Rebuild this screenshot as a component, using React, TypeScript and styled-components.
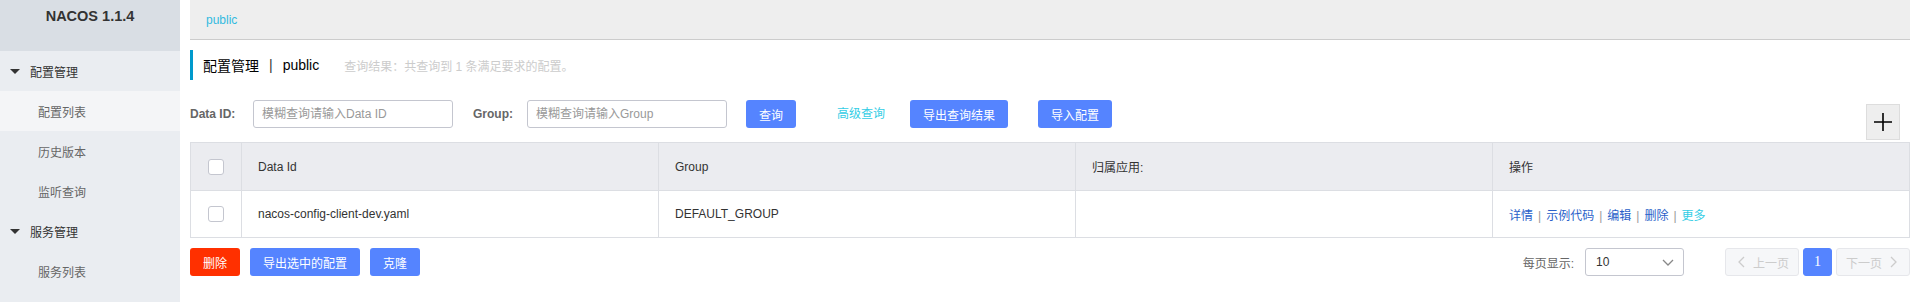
import React from "react";
import styled, { createGlobalStyle } from "styled-components";

const Global = createGlobalStyle`
  html, body { margin: 0; padding: 0; background: #fff; }
  body { font-family: "Liberation Sans", "Noto Sans CJK SC", sans-serif; font-size: 12px; color: #333; }
  * { box-sizing: border-box; }
`;

const Page = styled.div`
  display: flex;
  width: 1920px;
  height: 302px;
  overflow: hidden;
`;

const Sidebar = styled.aside`
  width: 180px;
  flex: none;
  background: #eaedf1;
  display: flex;
  flex-direction: column;
`;

const Logo = styled.div`
  height: 51px;
  background: #d9dee4;
  text-align: center;
  padding-top: 5px;
  font-family: "Liberation Sans", sans-serif;
  font-weight: bold;
  font-size: 14.5px;
  line-height: 22px;
  color: #333;
`;

const GroupItem = styled.div`
  height: 40px;
  display: flex;
  align-items: center;
  padding-left: 10px;
  font-size: 12px;
  color: #333;
`;

const Caret = styled.span`
  width: 0;
  height: 0;
  border-left: 5px solid transparent;
  border-right: 5px solid transparent;
  border-top: 5px solid #333;
  margin-right: 10px;
`;

const SubItem = styled.div<{ $active?: boolean }>`
  height: 40px;
  display: flex;
  align-items: center;
  padding-left: 38px;
  font-size: 12px;
  color: #666;
  background: ${(p) => (p.$active ? "#f4f5f7" : "transparent")};
`;

const Main = styled.main`
  flex: 1;
  padding: 0 10px;
  display: flex;
  flex-direction: column;
`;

const Crumb = styled.div`
  height: 40px;
  background: #eee;
  border-bottom: 1px solid #ccc;
  display: flex;
  align-items: center;
  padding-left: 16px;
  color: #33bbe0;
  font-size: 12px;
`;

const TitleRow = styled.div`
  margin-top: 10px;
  height: 30px;
  border-left: 3px solid #09c;
  display: flex;
  align-items: center;
  padding-left: 10px;
`;

const TitleText = styled.span`
  font-size: 14px;
  color: #000;
`;

const TitleSep = styled.span`
  font-size: 14px;
  color: #333;
  margin: 0 10px;
`;

const ResultText = styled.span`
  margin-left: 25px;
  font-size: 12px;
  color: #ccc;
`;

const Toolbar = styled.div`
  margin-top: 20px;
  display: flex;
  align-items: flex-start;
  height: 40px;
`;

const Label = styled.label<{ $w: number }>`
  width: ${(p) => p.$w}px;
  flex: none;
  font-weight: bold;
  font-size: 12px;
  color: #666;
  height: 28px;
  line-height: 28px;
`;

const Input = styled.input<{ $gap?: number }>`
  width: 200px;
  height: 28px;
  border: 1px solid #c4c6cf;
  border-radius: 3px;
  padding: 0 8px;
  font-family: inherit;
  font-size: 12px;
  color: #333;
  margin-right: ${(p) => p.$gap ?? 20}px;
  outline: none;
  &::placeholder { color: #999; }
`;

const Button = styled.button<{ $w: number; $danger?: boolean; $gap?: number }>`
  height: 28px;
  width: ${(p) => p.$w}px;
  flex: none;
  padding: 0;
  border: none;
  border-radius: 3px;
  background: ${(p) => (p.$danger ? "#ff3000" : "#5584ff")};
  color: #fff;
  font-family: inherit;
  font-size: 12px;
  margin-right: ${(p) => p.$gap ?? 30}px;
  cursor: pointer;
`;

const LinkBtn = styled.a`
  height: 28px;
  line-height: 28px;
  color: #33cde5;
  font-size: 12px;
  margin-left: 41px;
  margin-right: 25px;
`;

const PlusBtn = styled.button`
  margin-left: auto;
  margin-right: 10px;
  margin-top: 4px;
  width: 34px;
  height: 36px;
  background: #eee;
  border: 1px solid #ddd;
  display: flex;
  align-items: center;
  justify-content: center;
  padding: 0;
`;

const Table = styled.table`
  margin-top: 2px;
  width: 1720px;
  border-collapse: collapse;
  table-layout: fixed;
  border: 1px solid #dcdee3;
`;

const Th = styled.th`
  height: 48px;
  background: #ebecf0;
  border: 1px solid #dcdee3;
  text-align: left;
  font-weight: normal;
  font-size: 12px;
  color: #333;
  padding: 0 16px;
`;

const Td = styled.td`
  height: 47px;
  border: 1px solid #dcdee3;
  font-size: 12px;
  color: #333;
  padding: 0 16px;
`;

const CheckCell = styled.td`
  text-align: center;
  border: 1px solid #dcdee3;
  padding: 0;
`;

const CheckHead = styled.th`
  background: #ebecf0;
  border: 1px solid #dcdee3;
  padding: 0;
  height: 48px;
`;

const Checkbox = styled.span`
  display: inline-block;
  width: 16px;
  height: 16px;
  border: 1px solid #c4c6cf;
  border-radius: 3px;
  background: #fff;
  vertical-align: middle;
`;

const Op = styled.a<{ $more?: boolean }>`
  color: ${(p) => (p.$more ? "#33cde5" : "#2a5fc9")};
`;

const OpSep = styled.span`
  color: #999;
  margin: 0 5px;
`;

const Footer = styled.div`
  margin-top: 10px;
  display: flex;
  align-items: center;
`;

const PageLabel = styled.span`
  margin-left: auto;
  color: #666;
  font-size: 12px;
  margin-right: 11px;
`;

const Select = styled.div`
  width: 99px;
  height: 28px;
  border: 1px solid #c4c6cf;
  border-radius: 3px;
  display: flex;
  align-items: center;
  padding: 0 8px 0 10px;
  font-size: 12px;
  color: #333;
  justify-content: space-between;
  margin-right: 41px;
`;

const PageBtn = styled.button<{ $current?: boolean; $w: number; $first?: boolean }>`
  width: ${(p) => p.$w}px;
  height: 28px;
  border-radius: 3px;
  border: 1px solid ${(p) => (p.$current ? "#5584ff" : "#e6e7eb")};
  background: ${(p) => (p.$current ? "#5584ff" : "#f6f7f9")};
  color: ${(p) => (p.$current ? "#fff" : "#ccc")};
  font-family: ${(p) => (p.$current ? '"Liberation Serif", serif' : "inherit")};
  font-size: ${(p) => (p.$current ? 14 : 12)}px;
  display: flex;
  align-items: center;
  justify-content: center;
  gap: 4px;
  padding: 0;
  margin-left: ${(p) => (p.$first ? 0 : 4)}px;
`;

const Chevron = ({ dir }: { dir: "left" | "right" | "down" }) => {
  const d =
    dir === "left" ? "M9 2 L4 7 L9 12" : dir === "right" ? "M5 2 L10 7 L5 12" : "M2 5 L7 10 L12 5";
  return (
    <svg width="14" height="14" viewBox="0 0 14 14">
      <path d={d} fill="none" stroke={dir === "down" ? "#888" : "#ccc"} strokeWidth="1.3" />
    </svg>
  );
};

const ops = ["详情", "示例代码", "编辑", "删除"];

export default function App() {
  return (
    <>
      <Global />
      <Page>
        <Sidebar>
          <Logo>NACOS 1.1.4</Logo>
          <GroupItem>
            <Caret />
            配置管理
          </GroupItem>
          <SubItem $active>配置列表</SubItem>
          <SubItem>历史版本</SubItem>
          <SubItem>监听查询</SubItem>
          <GroupItem>
            <Caret />
            服务管理
          </GroupItem>
          <SubItem>服务列表</SubItem>
        </Sidebar>
        <Main>
          <Crumb>public</Crumb>
          <TitleRow>
            <TitleText>配置管理</TitleText>
            <TitleSep>|</TitleSep>
            <TitleText>public</TitleText>
            <ResultText>查询结果：共查询到 1 条满足要求的配置。</ResultText>
          </TitleRow>
          <Toolbar>
            <Label $w={63}>Data ID:</Label>
            <Input placeholder="模糊查询请输入Data ID" />
            <Label $w={54}>Group:</Label>
            <Input placeholder="模糊查询请输入Group" $gap={19} />
            <Button $w={50} $gap={0}>查询</Button>
            <LinkBtn>高级查询</LinkBtn>
            <Button $w={98}>导出查询结果</Button>
            <Button $w={74}>导入配置</Button>
            <PlusBtn>
              <svg width="22" height="22" viewBox="0 0 22 22">
                <path d="M11 2 V20 M2 11 H20" stroke="#000" strokeWidth="1.6" />
              </svg>
            </PlusBtn>
          </Toolbar>
          <Table>
            <colgroup>
              <col style={{ width: 51 }} />
              <col />
              <col />
              <col />
              <col />
            </colgroup>
            <thead>
              <tr>
                <CheckHead>
                  <Checkbox />
                </CheckHead>
                <Th>Data Id</Th>
                <Th>Group</Th>
                <Th>归属应用:</Th>
                <Th>操作</Th>
              </tr>
            </thead>
            <tbody>
              <tr>
                <CheckCell>
                  <Checkbox />
                </CheckCell>
                <Td>nacos-config-client-dev.yaml</Td>
                <Td>DEFAULT_GROUP</Td>
                <Td></Td>
                <Td>
                  {ops.map((o) => (
                    <React.Fragment key={o}>
                      <Op>{o}</Op>
                      <OpSep>|</OpSep>
                    </React.Fragment>
                  ))}
                  <Op $more>更多</Op>
                </Td>
              </tr>
            </tbody>
          </Table>
          <Footer>
            <Button $w={50} $danger $gap={10}>删除</Button>
            <Button $w={110} $gap={10}>导出选中的配置</Button>
            <Button $w={50}>克隆</Button>
            <PageLabel>每页显示:</PageLabel>
            <Select>
              <span>10</span>
              <Chevron dir="down" />
            </Select>
            <PageBtn $w={74} $first>
              <Chevron dir="left" />
              上一页
            </PageBtn>
            <PageBtn $w={29} $current>1</PageBtn>
            <PageBtn $w={74}>
              下一页
              <Chevron dir="right" />
            </PageBtn>
          </Footer>
        </Main>
      </Page>
    </>
  );
}
